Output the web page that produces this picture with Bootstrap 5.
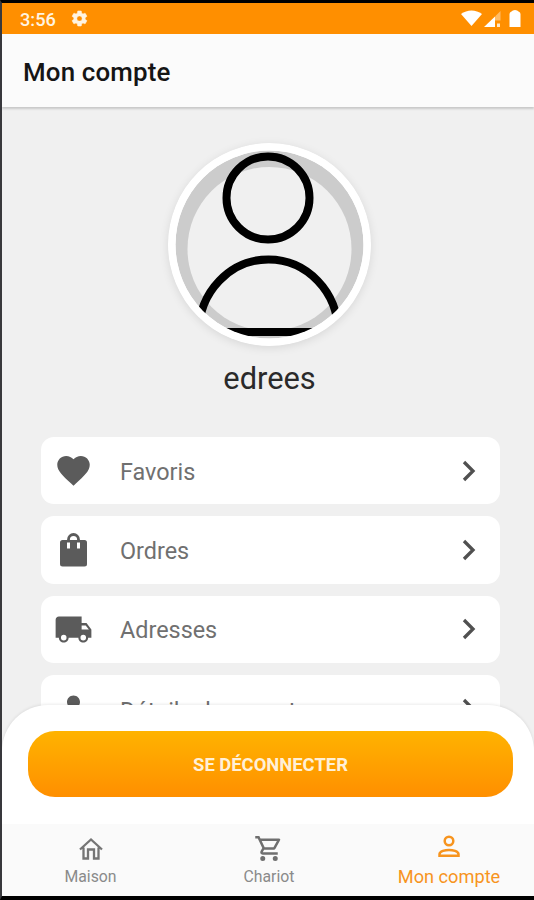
<!DOCTYPE html>
<html lang="fr">
<head>
<meta charset="utf-8">
<meta name="viewport" content="width=device-width, initial-scale=1">
<title>Mon compte</title>
<link href="https://cdn.jsdelivr.net/npm/bootstrap@5.3.0/dist/css/bootstrap.min.css" rel="stylesheet">
<style>
  html, body { height: 100%; }
  body { background: #000; font-family: Roboto, "Liberation Sans", sans-serif; overflow: hidden; }
  svg { display: block; flex: none; }
  .device { height: 900px; border-top: 3px solid #000; border-bottom: 4px solid #000; border-left: 2px solid #38383c; background: #f0f0f0; }
  .status-bar { height: 31px; background: #ff8f00; color: #fff4e2; font-size: 18.2px; font-weight: 500; padding: 0 13px 0 18px; flex: none; }
  .status-bar .clock { padding-top: 2px; width: 34px; white-space: nowrap; }
  .app-header { height: 73px; background: #fbfbfb; box-shadow: 0 2px 2px #c9c9c9; padding: 4px 0 0 21px; flex: none; color: #151515; font-size: 25.9px; letter-spacing: .15px; font-weight: 500; z-index: 1; }
  .profile { flex: 1 1 0; min-height: 0; }
  .hero { padding-left: 3px; }
  .avatar { width: 203px; height: 203px; margin-top: 36px; border-radius: 50%; box-shadow: 0 2px 10px rgba(0,0,0,.1); }
  .user-name { font-size: 30.8px; line-height: 36px; margin-top: 15px; color: #2a2a2a; margin-bottom: 40px; }
  .menu { padding: 0 34px 0 39px; gap: 12px; }
  .menu-row { height: 67.3px; flex: none; background: #fff; border-radius: 13px; color: #707070; font-size: 23.4px; padding: 0 19px 0 13px; }
  .menu-row span { margin-left: 27px; padding-top: 3px; }
  .menu-row:last-child span { padding-top: 6px; }
  .sheet { height: 119px; flex: none; background: #fff; padding: 26px 21px 0 26px; z-index: 1; border-radius: 46px 46px 0 0; box-shadow: 0 -1px 3px rgba(0,0,0,.08); margin-top: -46px; }
  .btn-logout, .btn-logout:hover { height: 66px; border: 0; border-radius: 27px; color: #fff0d8; font-size: 18.4px; font-weight: 700; padding-top: 8px; background: linear-gradient(#ffb300, #ff8f00); }
  .tab-bar { height: 72px; flex: none; background: #fafafa; color: #8a8a8a; font-size: 15.8px; z-index: 1; }
  .tab-bar a { color: inherit; line-height: 20px; padding-top: 9px; width: 180px; flex: none; }
  .tab-bar a:first-child { width: 177px; }
  .tab-bar a.current { color: #f7941e; font-size: 18.2px; }
</style>
<script src="https://cdn.jsdelivr.net/npm/bootstrap@5.3.0/dist/js/bootstrap.bundle.min.js"></script>
</head>
<body>
<div class="device d-flex flex-column overflow-hidden">
  <div class="status-bar d-flex align-items-center">
    <span class="clock">3:56</span>
    <svg class="ms-3" width="19" height="19" viewBox="0 0 24 24" fill="currentColor" stroke="currentColor" stroke-width=".600"><path d="M19.14 12.94c.04-.3.06-.61.06-.94s-.02-.64-.07-.94l2.03-1.58a.49.49 0 0 0 .12-.61l-1.92-3.32a.49.49 0 0 0-.59-.22l-2.39.96a7 7 0 0 0-1.62-.94l-.36-2.54A.48.48 0 0 0 13.92 2.4h-3.84a.48.48 0 0 0-.47.41l-.36 2.54c-.59.24-1.13.57-1.62.94l-2.39-.96a.48.48 0 0 0-.59.22L2.74 8.87a.48.48 0 0 0 .12.61l2.03 1.58a6 6 0 0 0-.02 1.88l-2.03 1.58a.49.49 0 0 0-.12.61l1.92 3.32c.12.22.37.29.59.22l2.39-.96c.5.38 1.03.7 1.62.94l.36 2.54c.05.24.24.41.48.41h3.84c.24 0 .44-.17.47-.41l.36-2.54a7 7 0 0 0 1.62-.94l2.39.96c.22.08.47 0 .59-.22l1.92-3.32a.48.48 0 0 0-.12-.61zM12 15.3a3.3 3.3 0 1 1 0-6.6 3.3 3.3 0 0 1 0 6.6z"/></svg>
    <svg class="ms-auto" width="60" height="20" viewBox="0 0 60 20" fill="#fff">
      <path d="M0 5C6 .3 15 .3 21 5L10.500 17z"/>
      <path d="M23 18L34 7.500V18z"/><path d="M34 7.500L39.500 2v9.500H34z" fill-opacity=".4"/><path d="M36 14.500h3V18h-3z" fill-opacity=".8"/>
      <path d="M48.500 5q0-2 2-2.500 1-1.500 3.500-1.500t3.500 1.500q2 .5 2 2.500v13h-11z"/>
    </svg>
  </div>
  <header class="app-header d-flex align-items-center">Mon compte</header>

  <main class="profile d-flex flex-column overflow-hidden">
    <div class="hero text-center">
      <svg class="avatar mx-auto" viewBox="0 0 203 203">
        <defs><clipPath id="disc"><circle cx="101.500" cy="101.500" r="94"/></clipPath></defs>
        <circle cx="101.500" cy="101.500" r="101.500" fill="#fff"/>
        <g clip-path="url(#disc)">
          <circle cx="101.500" cy="101.500" r="94" fill="#ccc"/>
          <circle cx="101.500" cy="106" r="82" fill="#f0f0f0"/>
          <g fill="none" stroke="#000" stroke-width="8">
            <circle cx="100" cy="55" r="41.500"/>
            <path d="M31 189a69 72 0 0 1 139 0z"/>
          </g>
        </g>
      </svg>
      <div class="user-name">edrees</div>
    </div>
    <div class="menu d-flex flex-column">
      <div class="menu-row d-flex align-items-center">
        <svg width="39" height="39" viewBox="0 0 24 24" fill="#5b5b5b"><path d="M12 21.350l-1.450-1.320C5.400 15.360 2 12.280 2 8.500 2 5.420 4.420 3 7.500 3c1.740 0 3.410.810 4.500 2.090C13.090 3.810 14.760 3 16.500 3 19.580 3 22 5.420 22 8.500c0 3.780-3.400 6.860-8.550 11.540z"/></svg>
        <span>Favoris</span>
        <svg class="ms-auto" width="24" height="24" viewBox="0 0 24 24" fill="none" stroke="#505050" stroke-width="3.300"><path d="M7 3l9 9-9 9"/></svg>
      </div>
      <div class="menu-row d-flex align-items-center">
        <svg width="39" height="39" viewBox="0 0 39 39"><path d="M14.500 12V9.500a5 5 0 0 1 10 0V12" fill="none" stroke="#5b5b5b" stroke-width="2.800"/><path d="M8.500 10h22a2.500 2.500 0 0 1 2.500 2.500v21.500a2.500 2.500 0 0 1-2.500 2.500h-22A2.500 2.500 0 0 1 6 34v-21.500A2.500 2.500 0 0 1 8.500 10z" fill="#5b5b5b"/><path d="M14.500 12.500v6M24.500 12.500v6" stroke="#fff" stroke-width="3"/></svg>
        <span>Ordres</span>
        <svg class="ms-auto" width="24" height="24" viewBox="0 0 24 24" fill="none" stroke="#505050" stroke-width="3.300"><path d="M7 3l9 9-9 9"/></svg>
      </div>
      <div class="menu-row d-flex align-items-center">
        <svg width="39" height="39" viewBox="0 0 24 24" fill="#5b5b5b"><path d="M20 8h-3V4H3c-1.100 0-2 .900-2 2v11h2c0 1.660 1.340 3 3 3s3-1.340 3-3h6c0 1.660 1.340 3 3 3s3-1.340 3-3h2v-5zM6 18.700A1.700 1.700 0 1 1 6 15.300a1.700 1.700 0 0 1 0 3.400zM19.500 9.500l1.960 2.500H17V9.500zM18 18.700a1.700 1.700 0 1 1 0-3.400 1.700 1.700 0 0 1 0 3.400z"/></svg>
        <span>Adresses</span>
        <svg class="ms-auto" width="24" height="24" viewBox="0 0 24 24" fill="none" stroke="#505050" stroke-width="3.300"><path d="M7 3l9 9-9 9"/></svg>
      </div>
      <div class="menu-row d-flex align-items-center">
        <svg width="39" height="39" viewBox="0 0 24 24" fill="#5b5b5b"><path d="M12 12c2.210 0 4-1.790 4-4s-1.790-4-4-4-4 1.790-4 4 1.790 4 4 4zm0 2c-2.670 0-8 1.340-8 4v2h16v-2c0-2.660-5.330-4-8-4z"/></svg>
        <span>Détails du compte</span>
        <svg class="ms-auto" width="24" height="24" viewBox="0 0 24 24" fill="none" stroke="#505050" stroke-width="3.300"><path d="M7 3l9 9-9 9"/></svg>
      </div>
    </div>
  </main>

  <div class="sheet">
    <button type="button" class="btn btn-logout w-100">SE DÉCONNECTER</button>
  </div>

  <nav class="tab-bar d-flex">
    <a href="#" class="d-flex flex-column align-items-center text-decoration-none">
      <svg width="30" height="34" viewBox="0 0 30 34" fill="none" stroke="#757575" stroke-width="2.300"><path d="M4 16.500L15 6.500l11 10M7.500 14.500V25.500H12v-9h6v9h4.500V14.500"/></svg>
      <span>Maison</span>
    </a>
    <a href="#" class="d-flex flex-column align-items-center text-decoration-none">
      <svg width="30" height="34" viewBox="0 1.700 24 27" fill="#6f6f6f"><path d="M15.550 15c.750 0 1.410-.410 1.750-1.030l3.580-6.490A1 1 0 0 0 20.010 6H5.210l-.940-2H1v2h2l3.600 7.590-1.350 2.440C4.520 17.370 5.480 19 7 19h12v-2H7l1.100-2zM6.160 8h12.150l-2.760 5H8.530zM7 20a2 2 0 1 0 0 4 2 2 0 0 0 0-4zm10 0a2 2 0 1 0 0 4 2 2 0 0 0 0-4z"/></svg>
      <span>Chariot</span>
    </a>
    <a href="#" class="current d-flex flex-column align-items-center text-decoration-none">
      <svg width="30" height="34" viewBox="0 0 30 34" fill="none" stroke="currentColor" stroke-width="2.500"><circle cx="15" cy="8" r="4.300"/><path d="M5.500 22.800v-1.600c0-3 6-4.300 9.500-4.300s9.500 1.300 9.500 4.300v1.600z"/></svg>
      <span>Mon compte</span>
    </a>
  </nav>
</div>
</body>
</html>
